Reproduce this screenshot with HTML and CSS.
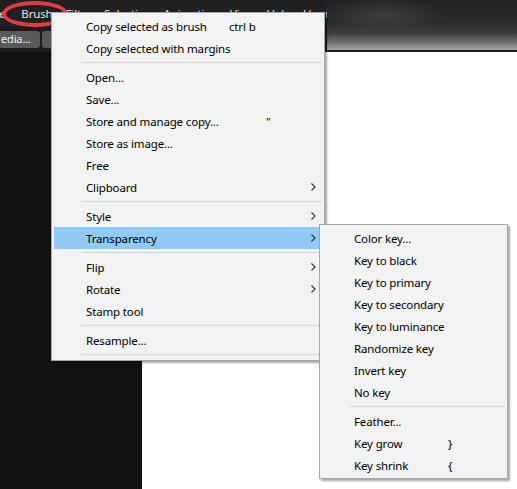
FILE: index.html
```html
<!DOCTYPE html>
<html lang="en">
<head>
    <meta charset="UTF-8">
    <title>Brush menu</title>
    <link rel="stylesheet" href="styles.css">
</head>
<body>
    <div class="app">
        <header class="top">
            <div class="top-left">
                <nav class="menubar">
                    <span class="mb-item mb-cut">e</span>
                    <span class="mb-item mb-open">Brush</span>
                    <span class="mb-item">Filter</span>
                    <span class="mb-item">Selection</span>
                    <span class="mb-item">Animation</span>
                    <span class="mb-item">View</span>
                    <span class="mb-item">Help</span>
                    <span class="mb-item">Upgra</span>
                </nav>
                <div class="toolbar">
                    <span class="tb-btn">edia...</span>
                    <span class="tb-drop"></span>
                </div>
            </div>
            <div class="top-right"></div>
        </header>
        <div class="workspace">
            <div class="side"></div>
            <div class="canvas"></div>
        </div>

        <!-- annotation round the open menu title -->
        <div class="marker"></div>

        <div class="menu menu-main">
            <div class="item"><span class="label">Copy selected as brush</span><span class="key">ctrl b</span></div>
            <div class="item"><span class="label">Copy selected with margins</span></div>
            <div class="sep"></div>
            <div class="item"><span class="label">Open...</span></div>
            <div class="item"><span class="label">Save...</span></div>
            <div class="item"><span class="label">Store and manage copy...</span><span class="key key-far">"</span></div>
            <div class="item"><span class="label">Store as image...</span></div>
            <div class="item"><span class="label">Free</span></div>
            <div class="item has-sub"><span class="label">Clipboard</span>
                <svg class="arrow" width="5" height="8" viewBox="0 0 5 8"><path d="M0.5 0.5 L4 4 L0.5 7.5" fill="none" stroke="#333" stroke-width="1.1"/></svg>
            </div>
            <div class="sep"></div>
            <div class="item has-sub"><span class="label">Style</span>
                <svg class="arrow" width="5" height="8" viewBox="0 0 5 8"><path d="M0.5 0.5 L4 4 L0.5 7.5" fill="none" stroke="#333" stroke-width="1.1"/></svg>
            </div>
            <div class="item has-sub active"><span class="label">Transparency</span>
                <svg class="arrow" width="5" height="8" viewBox="0 0 5 8"><path d="M0.5 0.5 L4 4 L0.5 7.5" fill="none" stroke="#333" stroke-width="1.1"/></svg>
            </div>
            <div class="sep"></div>
            <div class="item has-sub"><span class="label">Flip</span>
                <svg class="arrow" width="5" height="8" viewBox="0 0 5 8"><path d="M0.5 0.5 L4 4 L0.5 7.5" fill="none" stroke="#333" stroke-width="1.1"/></svg>
            </div>
            <div class="item has-sub"><span class="label">Rotate</span>
                <svg class="arrow" width="5" height="8" viewBox="0 0 5 8"><path d="M0.5 0.5 L4 4 L0.5 7.5" fill="none" stroke="#333" stroke-width="1.1"/></svg>
            </div>
            <div class="item"><span class="label">Stamp tool</span></div>
            <div class="sep"></div>
            <div class="item"><span class="label">Resample...</span></div>
            <div class="sep"></div>
        </div>

        <div class="menu menu-sub">
            <div class="item"><span class="label">Color key...</span></div>
            <div class="item"><span class="label">Key to black</span></div>
            <div class="item"><span class="label">Key to primary</span></div>
            <div class="item"><span class="label">Key to secondary</span></div>
            <div class="item"><span class="label">Key to luminance</span></div>
            <div class="item"><span class="label">Randomize key</span></div>
            <div class="item"><span class="label">Invert key</span></div>
            <div class="item"><span class="label">No key</span></div>
            <div class="sep"></div>
            <div class="item"><span class="label">Feather...</span></div>
            <div class="item"><span class="label">Key grow</span><span class="key">}</span></div>
            <div class="item"><span class="label">Key shrink</span><span class="key">{</span></div>
        </div>
    </div>
</body>
</html>
```

FILE: styles.css
```css
* {
    box-sizing: border-box;
    margin: 0;
    padding: 0;
}

html, body {
    width: 100%;
    height: 100%;
    overflow: hidden;
}

body {
    font-family: "Noto Sans", "Liberation Sans", sans-serif;
    font-size: 11.5px;
    letter-spacing: -0.15px;
    background: #111111;
}

.app {
    position: relative;
    width: 517px;
    height: 489px;
    display: flex;
    flex-direction: column;
}

/* top chrome */
.top {
    display: flex;
    height: 52px;
}

.top-left {
    width: 327px;
    overflow: hidden;
    background: #1c1c1c;
}

.menubar {
    display: flex;
    height: 26px;
    align-items: center;
    background: #202020;
    white-space: nowrap;
}

.mb-item {
    color: #e6e6e6;
    padding: 0 6px;
}

.mb-cut {
    margin-left: -7px;
    padding-right: 10px;
}

.mb-open {
    padding-right: 7px;
}

.toolbar {
    display: flex;
    gap: 2px;
    padding-top: 5px;
    height: 26px;
}

.tb-btn {
    height: 17px;
    width: 40px;
    padding-left: 1px;
    background: #595959;
    border-radius: 0 3px 3px 0;
    color: #f0f0f0;
    font-size: 11px;
    line-height: 16px;
}

.tb-drop {
    width: 10px;
    height: 17px;
    background: #595959;
    border-radius: 3px 0 0 3px;
}

.top-right {
    flex: 1;
    border-bottom: 2px solid #1a1a1a;
    background:
        radial-gradient(ellipse 60px 18px at 30% 30%, rgba(80, 80, 80, 0.5), rgba(80, 80, 80, 0)),
        linear-gradient(to bottom, #232323 0%, #2b2b2b 45%, #3c3c3c 65%, #707070 85%, #a9a9a9 100%);
}

/* workspace */
.workspace {
    display: flex;
    flex: 1;
}

.side {
    width: 142px;
    background: #111111;
}

.canvas {
    flex: 1;
    background: #ffffff;
}

.marker {
    position: absolute;
    left: 2px;
    top: 1px;
    width: 66px;
    height: 26px;
    border: 4px solid #e23b40;
    border-radius: 50%;
}

/* popup menus */
.menu {
    position: absolute;
    background: #f2f2f2;
    border: 1px solid #a7a7a7;
    padding: 2px;
    box-shadow: 2px 2px 2px rgba(0, 0, 0, 0.35);
    color: #000000;
}

.menu-main {
    left: 51px;
    top: 12px;
    width: 274px;
}

.menu-sub {
    left: 319px;
    top: 224px;
    width: 189px;
}

.item {
    display: flex;
    align-items: center;
    height: 22px;
    padding-left: 32px;
    white-space: nowrap;
}

.item.active {
    background: #91c9f7;
}

.menu-main .label {
    width: 143px;
}

.menu-sub .label {
    width: 94px;
}

.key-far {
    padding-left: 37px;
}

.has-sub .label {
    flex: 1;
}

.arrow {
    margin-right: 6px;
}

.sep {
    height: 7px;
    margin-left: 28px;
    border-top: 3px solid transparent;
    background-clip: padding-box;
}

.sep::after {
    content: "";
    display: block;
    height: 1px;
    background: #d7d7d7;
}
```
